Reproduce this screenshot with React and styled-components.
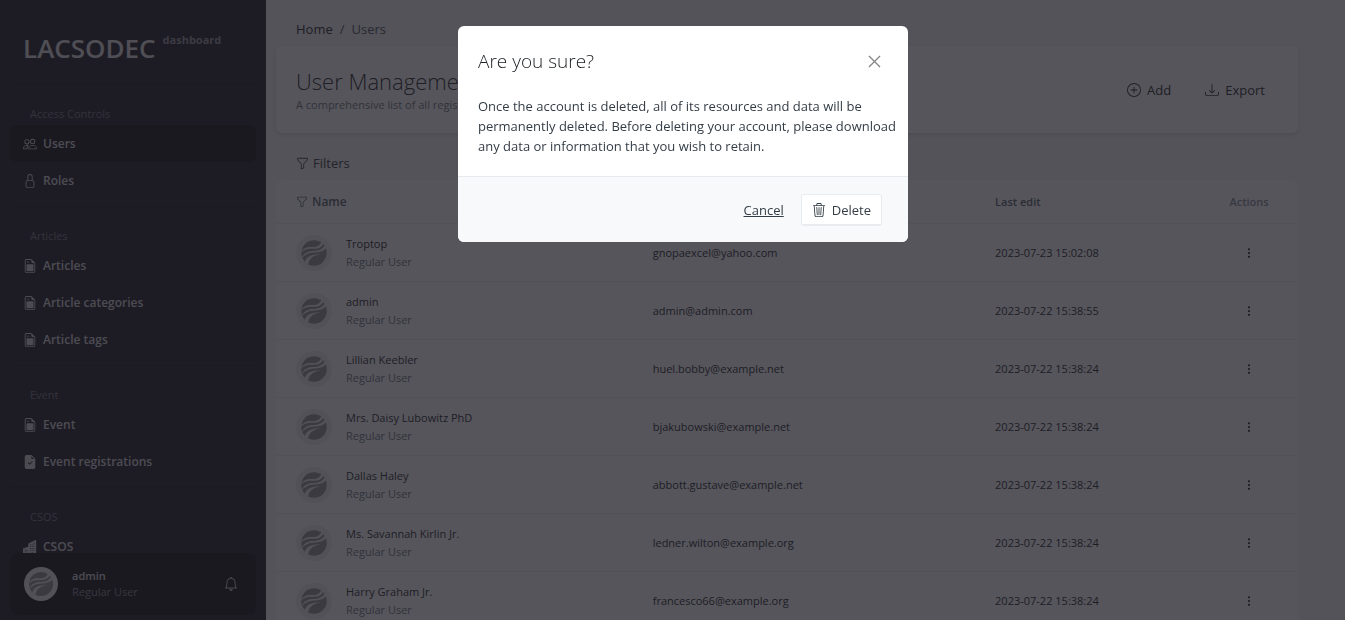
import React from "react";
import styled, { createGlobalStyle } from "styled-components";
import {
  BsPeople,
  BsLock,
  BsFileEarmarkPost,
  BsFileEarmarkCheckFill,
  BsBuildingsFill,
  BsBell,
  BsFunnel,
  BsPlusCircle,
  BsDownload,
  BsThreeDotsVertical,
  BsTrash3,
  BsXLg,
} from "react-icons/bs";

const GlobalStyle = createGlobalStyle`
  *, *::before, *::after { box-sizing: border-box; }
  body {
    margin: 0;
    overflow: hidden;
    background: #f4f5f7;
    color: #212529;
    font: 400 13px/20px "Open Sans", "Noto Sans", sans-serif;
  }
  h1, h2, h3, p, ul, ol { margin: 0; padding: 0; }
  ul, ol { list-style: none; }
  a { color: inherit; text-decoration: none; }
  button { font: inherit; color: inherit; cursor: pointer; }
  svg { flex: none; display: block; }
`;

const Shell = styled.div`
  display: flex;
  height: 100vh;
  overflow: hidden;
`;

/* Sidebar */

const Sidebar = styled.aside`
  display: flex;
  flex-direction: column;
  flex: none;
  width: 266px;
  padding: 0 10px 5px;
  background: #1e1c26;
  color: #d8d8dc;
`;

const Brand = styled.a`
  display: flex;
  align-items: flex-start;
  flex: none;
  gap: 7px;
  height: 84px;
  padding: 28px 13px 0;
  font-size: 26px;
  font-weight: 600;
  line-height: 40px;
  color: #e2e2e6;
`;

const BrandNote = styled.small`
  font-size: 11px;
  font-weight: 700;
  line-height: 24px;
  color: #94949c;
`;

const Nav = styled.nav`
  flex: 1;
  min-height: 0;
  overflow: hidden;
`;

const NavGroup = styled.section`
  padding: 18px 0 7px;
  border-top: 1px solid #16151a;
`;

const NavLabel = styled.h3`
  padding-left: 20px;
  font-size: 11px;
  font-weight: 400;
  line-height: 22px;
  color: #74727e;
`;

const NavLink = styled.a`
  display: flex;
  align-items: center;
  gap: 6px;
  height: 37px;
  padding: 0 13px;
  border-radius: 6px;
  font-size: 12px;
  font-weight: 600;
  background: ${(p) => (p.$active ? "#131115" : "transparent")};
`;

const Profile = styled.div`
  display: flex;
  align-items: center;
  flex: none;
  gap: 14px;
  height: 62px;
  padding: 0 18px 0 14px;
  border-radius: 8px;
  background: #131115;
`;

const ProfileText = styled.div`
  flex: 1;
  font-size: 11px;
  font-weight: 600;
  line-height: 16px;
`;

const ProfileRole = styled.div`
  font-weight: 400;
  color: #84838c;
`;

const IconButton = styled.button`
  display: flex;
  padding: 0;
  border: 0;
  background: none;
  color: ${(p) => p.$color || "inherit"};
`;

/* Main column */

const Main = styled.main`
  flex: 1;
  min-width: 0;
  padding: 19px 47px 0 10px;
`;

const Breadcrumb = styled.ol`
  display: flex;
  gap: 7px;
  height: 27px;
  padding-left: 20px;
`;

const Crumb = styled.li`
  color: ${(p) => (p.$muted ? "#495057" : "#212529")};
`;

const PageHeader = styled.header`
  display: flex;
  align-items: center;
  justify-content: space-between;
  height: 87px;
  padding: 0 33px 0 20px;
  border-radius: 6px;
  background: #fff;
  box-shadow: 0 2px 4px rgba(0, 0, 0, 0.12);
`;

const PageTitle = styled.h1`
  font-size: 22px;
  font-weight: 300;
  line-height: 30px;
`;

const PageNote = styled.p`
  font-size: 11px;
  line-height: 18px;
  color: #6c757d;
`;

const Actions = styled.div`
  display: flex;
  gap: 34px;
`;

const Action = styled.button`
  display: flex;
  align-items: center;
  gap: 6px;
  padding: 0;
  border: 0;
  background: none;
`;

const FilterButton = styled(Action)`
  gap: 4px;
  height: 47px;
  padding: 13px 0 0 20px;
  color: #343a40;
`;

const Table = styled.table`
  width: 100%;
  table-layout: fixed;
  border-collapse: separate;
  border-spacing: 0;
  border-radius: 8px;
  background: #fff;
  font-size: 11px;
  line-height: 18px;
`;

const HeadCell = styled.th`
  width: ${(p) => p.$width || "auto"};
  height: 44px;
  padding: 0 19px;
  border-bottom: 1px solid #eceef0;
  font-weight: 600;
  text-align: ${(p) => (p.$center ? "center" : "left")};
  color: ${(p) => (p.$center ? "#868e96" : "#56606a")};
`;

const HeadLabel = styled.span`
  display: flex;
  align-items: center;
  gap: 4px;
  padding-left: 1px;
  font-size: 12px;
`;

const Cell = styled.td`
  height: 58px;
  padding: 0 19px;
  border-bottom: 1px solid #eceef0;
`;

const MenuCell = styled(Cell)`
  padding: 0 43px;
`;

const Person = styled.div`
  display: flex;
  align-items: center;
  gap: 14px;
  padding-left: 1px;
`;

const Role = styled.div`
  color: #6c757d;
`;

/* Dialog */

const Overlay = styled.div`
  position: fixed;
  inset: 0;
  display: flex;
  align-items: flex-start;
  justify-content: center;
  padding: 26px 0 0 21px;
  background: rgba(30, 28, 36, 0.75);
`;

const Dialog = styled.section`
  width: 450px;
  overflow: hidden;
  border-radius: 6px;
  background: #fff;
`;

const DialogHead = styled.header`
  display: flex;
  align-items: center;
  justify-content: space-between;
  padding: 20px 26px 14px 20px;
`;

const DialogTitle = styled.h2`
  font-size: 19px;
  font-weight: 300;
  line-height: 30px;
`;

const DialogBody = styled.p`
  padding: 6px 8px 20px 20px;
  line-height: 20px;
  color: #343d46;
`;

const DialogFoot = styled.footer`
  display: flex;
  align-items: center;
  justify-content: flex-end;
  gap: 17px;
  padding: 17px 26px 16px;
  border-top: 1px solid #e6e9ec;
  background: #f8f9fb;
`;

const CancelButton = styled.button`
  padding: 0;
  border: 0;
  background: none;
  text-decoration: underline;
  color: #343d46;
`;

const DeleteButton = styled.button`
  display: flex;
  align-items: center;
  gap: 6px;
  height: 32px;
  padding: 0 10px;
  border: 1px solid #e9ecef;
  border-bottom-width: 2px;
  border-radius: 3px;
  background: #fff;
  color: #343d46;
`;

const CloseIcon = styled(BsXLg)`
  stroke: currentColor;
  stroke-width: 0.4;
`;

const NAV = [
  {
    label: "Access Controls",
    items: [
      { text: "Users", Icon: BsPeople, active: true },
      { text: "Roles", Icon: BsLock },
    ],
  },
  {
    label: "Articles",
    items: [
      { text: "Articles", Icon: BsFileEarmarkPost },
      { text: "Article categories", Icon: BsFileEarmarkPost },
      { text: "Article tags", Icon: BsFileEarmarkPost },
    ],
  },
  {
    label: "Event",
    items: [
      { text: "Event", Icon: BsFileEarmarkPost },
      { text: "Event registrations", Icon: BsFileEarmarkCheckFill },
    ],
  },
  { label: "CSOS", items: [{ text: "CSOS", Icon: BsBuildingsFill }] },
];

const USERS = [
  ["Troptop", "gnopaexcel@yahoo.com", "2023-07-23 15:02:08"],
  ["admin", "admin@admin.com", "2023-07-22 15:38:55"],
  ["Lillian Keebler", "huel.bobby@example.net", "2023-07-22 15:38:24"],
  ["Mrs. Daisy Lubowitz PhD", "bjakubowski@example.net", "2023-07-22 15:38:24"],
  ["Dallas Haley", "abbott.gustave@example.net", "2023-07-22 15:38:24"],
  ["Ms. Savannah Kirlin Jr.", "ledner.wilton@example.org", "2023-07-22 15:38:24"],
  ["Harry Graham Jr.", "francesco66@example.org", "2023-07-22 15:38:24"],
];

function Avatar({ size = 34 }) {
  return (
    <svg width={size} height={size} viewBox="0 0 34 34" aria-hidden="true">
      <circle cx="17" cy="17" r="17" fill="#eeeef1" />
      <circle cx="17" cy="17" r="12" fill="#929298" />
      <g fill="#eeeef1">
        <path d="M4 17C7 12 11 11.200 15 11.400C20 11.600 23 10 24 6L26 7.500C24.500 12 20.500 13.200 16 13C11 12.800 8 13.500 4 17Z" />
        <path d="M5 22.500C7.500 16 12 15.200 17 15C22 14.800 25 13.500 27 10L28.500 12C26 15.800 22 16.300 17 16.600C12.500 16.900 9.500 17.800 5 22.500Z" />
        <path d="M8 26.500C9.500 20 13.500 18.700 24 17.600C17 19.600 13 20.800 11.300 28Z" />
      </g>
    </svg>
  );
}

export default function App() {
  return (
    <>
      <GlobalStyle />
      <Shell>
        <Sidebar>
          <Brand href="#">
            LACSODEC <BrandNote>dashboard</BrandNote>
          </Brand>
          <Nav>
            {NAV.map(({ label, items }) => (
              <NavGroup key={label}>
                <NavLabel>{label}</NavLabel>
                {items.map(({ text, Icon, active }) => (
                  <NavLink key={text} href="#" $active={active}>
                    <Icon size={14} />
                    {text}
                  </NavLink>
                ))}
              </NavGroup>
            ))}
          </Nav>
          <Profile>
            <Avatar />
            <ProfileText>
              admin
              <ProfileRole>Regular User</ProfileRole>
            </ProfileText>
            <IconButton aria-label="Notifications">
              <BsBell size={14} />
            </IconButton>
          </Profile>
        </Sidebar>

        <Main>
          <Breadcrumb>
            <Crumb>
              <a href="#">Home</a>
            </Crumb>
            <Crumb $muted>/</Crumb>
            <Crumb $muted>Users</Crumb>
          </Breadcrumb>
          <PageHeader>
            <div>
              <PageTitle>User Management</PageTitle>
              <PageNote>A comprehensive list of all registered users</PageNote>
            </div>
            <Actions>
              <Action>
                <BsPlusCircle size={14} />
                Add
              </Action>
              <Action>
                <BsDownload size={14} />
                Export
              </Action>
            </Actions>
          </PageHeader>
          <FilterButton>
            <BsFunnel size={13} />
            Filters
          </FilterButton>
          <Table>
            <thead>
              <tr>
                <HeadCell $width="35%">
                  <HeadLabel>
                    <BsFunnel size={12} />
                    Name
                  </HeadLabel>
                </HeadCell>
                <HeadCell $width="33.5%">Email</HeadCell>
                <HeadCell>Last edit</HeadCell>
                <HeadCell $width="98px" $center>
                  Actions
                </HeadCell>
              </tr>
            </thead>
            <tbody>
              {USERS.map(([name, email, edited]) => (
                <tr key={email}>
                  <Cell>
                    <Person>
                      <Avatar size={36} />
                      <div>
                        {name}
                        <Role>Regular User</Role>
                      </div>
                    </Person>
                  </Cell>
                  <Cell>{email}</Cell>
                  <Cell>{edited}</Cell>
                  <MenuCell>
                    <IconButton aria-label={"Actions for " + name}>
                      <BsThreeDotsVertical size={12} />
                    </IconButton>
                  </MenuCell>
                </tr>
              ))}
            </tbody>
          </Table>
        </Main>
      </Shell>

      <Overlay>
        <Dialog role="dialog" aria-modal="true" aria-labelledby="confirm-title">
          <DialogHead>
            <DialogTitle id="confirm-title">Are you sure?</DialogTitle>
            <IconButton aria-label="Close" $color="#808080">
              <CloseIcon size={15} />
            </IconButton>
          </DialogHead>
          <DialogBody>
            Once the account is deleted, all of its resources and data will be
            permanently deleted. Before deleting your account, please download
            any data or information that you wish to retain.
          </DialogBody>
          <DialogFoot>
            <CancelButton>Cancel</CancelButton>
            <DeleteButton>
              <BsTrash3 size={14} />
              Delete
            </DeleteButton>
          </DialogFoot>
        </Dialog>
      </Overlay>
    </>
  );
}
